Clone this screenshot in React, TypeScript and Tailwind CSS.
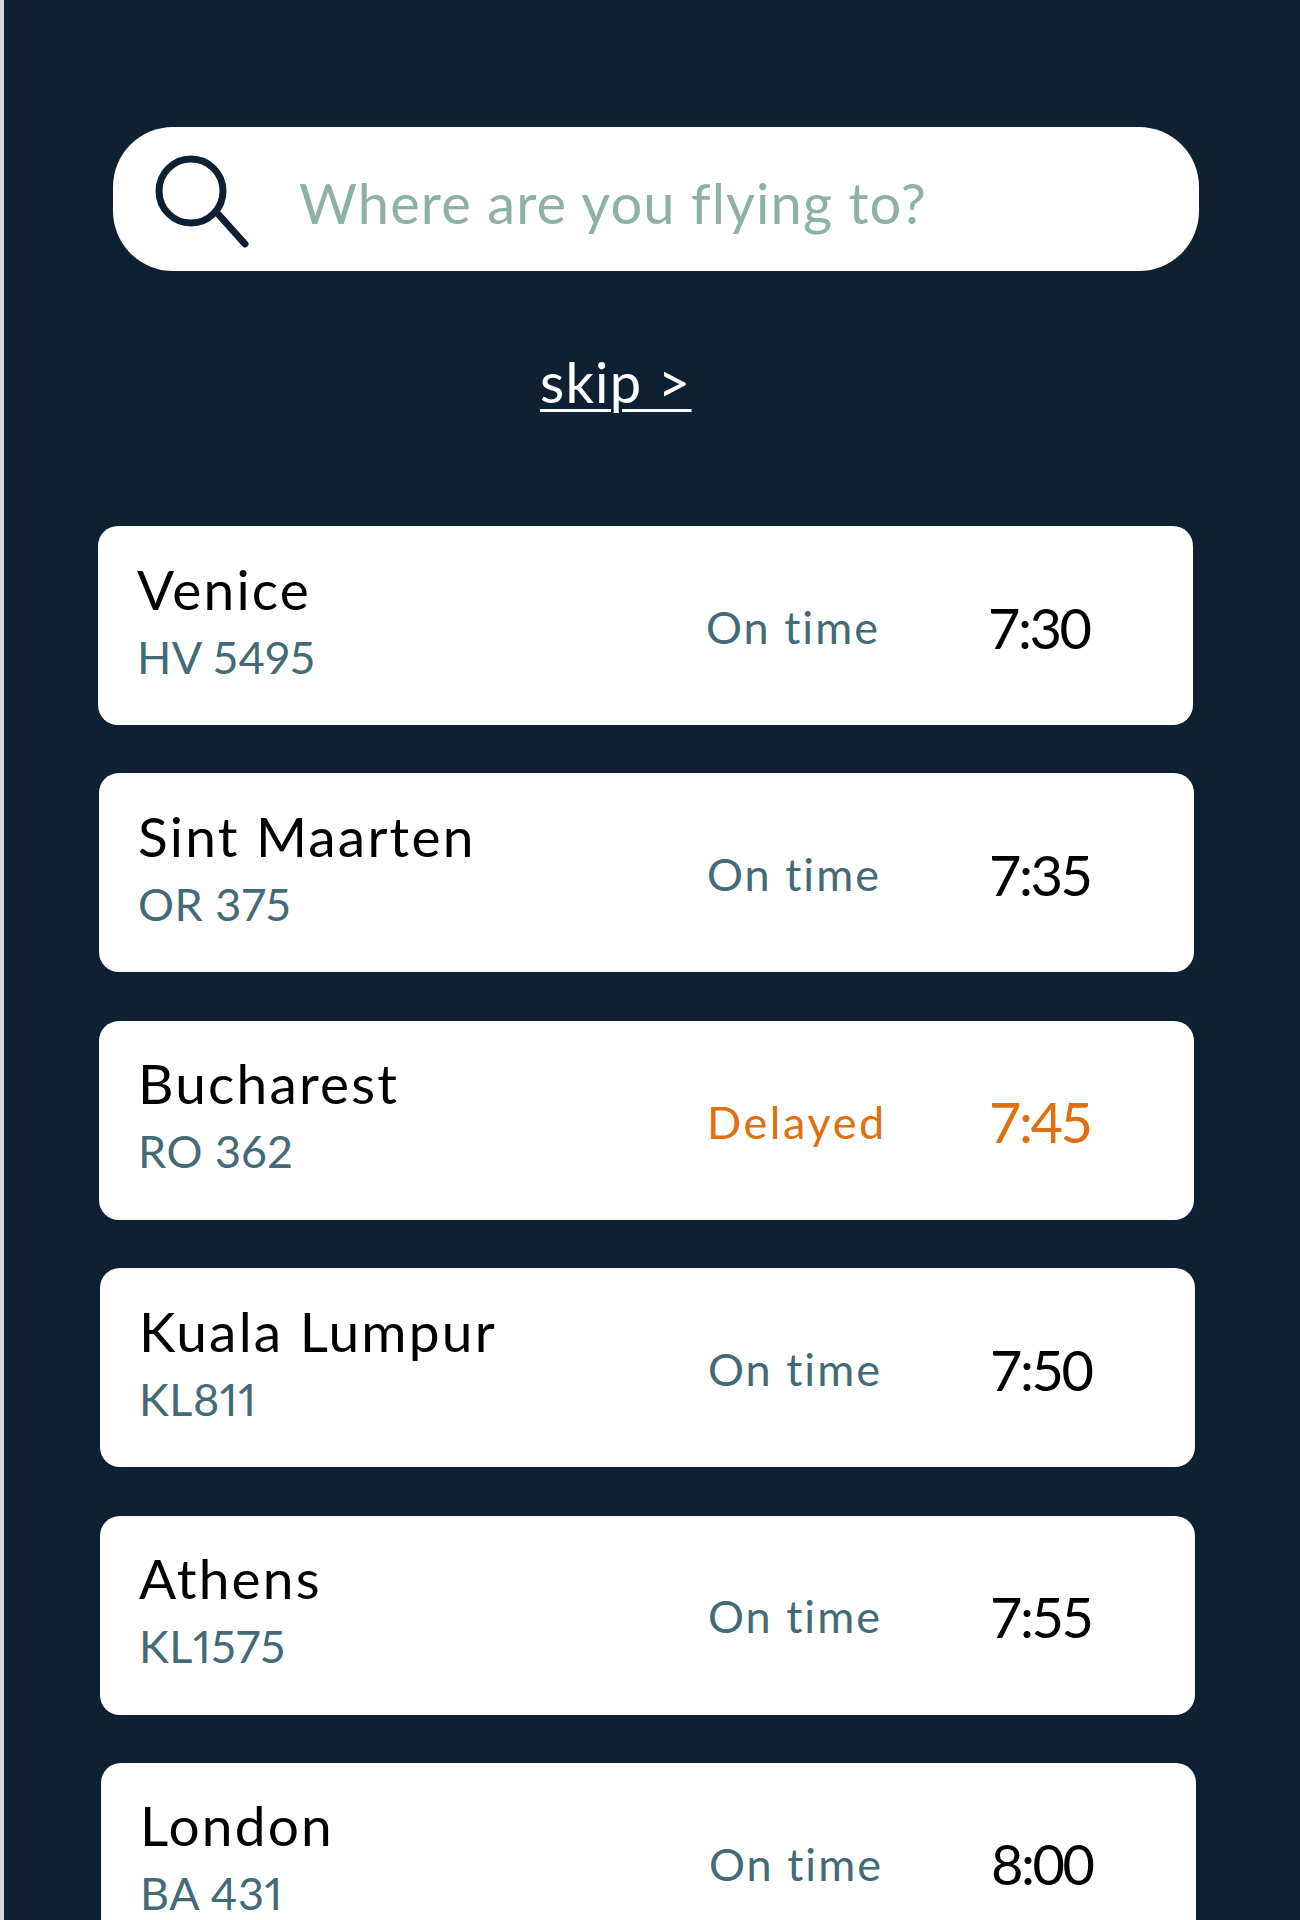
import React from "react";
import { clsx } from "clsx";

type Flight = {
  city: string;
  code: string;
  status: string;
  time: string;
  shift: string;
};

const flights: Flight[] = [
  { city: "Venice", code: "HV 5495", status: "On time", time: "7:30", shift: "ml-[94px]" },
  { city: "Sint Maarten", code: "OR 375", status: "On time", time: "7:35", shift: "ml-[95px]" },
  { city: "Bucharest", code: "RO 362", status: "Delayed", time: "7:45", shift: "ml-[95px]" },
  { city: "Kuala Lumpur", code: "KL811", status: "On time", time: "7:50", shift: "ml-[96px]" },
  { city: "Athens", code: "KL1575", status: "On time", time: "7:55", shift: "ml-[96px]" },
  { city: "London", code: "BA 431", status: "On time", time: "8:00", shift: "ml-[97px]" },
];

function FlightRow({ flight }: { flight: Flight }) {
  const delayed = flight.status === "Delayed";
  return (
    <div className={clsx("flex h-[199px] w-[1095px] shrink-0 items-center rounded-[20px] bg-white pl-[39px]", flight.shift)}>
      <div className="w-[569px] shrink-0 pb-[11px]">
        <div className="text-[55px] leading-[62px] tracking-[2.2px] text-black">{flight.city}</div>
        <div className="mt-[11px] text-[45px] leading-[52px] tracking-[0.5px] text-[#436a76] proportional-nums">{flight.code}</div>
      </div>
      <div
        className={clsx(
          "w-[282px] shrink-0 pt-[4px] text-[45px]",
          delayed ? "tracking-[2.6px] text-[#e06f10]" : "tracking-[2px] text-[#436a76]",
        )}
      >
        {flight.status}
      </div>
      <div className={clsx("pt-[4px] text-[56px] tracking-[-2.5px]", delayed ? "text-[#e06f10]" : "text-black")}>{flight.time}</div>
    </div>
  );
}

export default function App() {
  return (
    <div className="h-[1920px] overflow-hidden border-l-[4px] border-[#d5d9dd] bg-[#0f2032] pt-[127px] font-['Lato',sans-serif]">
      <div className="ml-[109px] flex h-[144px] w-[1086px] items-center rounded-[60px] bg-white pt-[8px] pl-[40px]">
        <svg width="100" height="100" viewBox="0 0 100 100" fill="none" stroke="#0f2032" strokeWidth="7" strokeLinecap="round">
          <circle cx="38" cy="38" r="32" />
          <line x1="66" y1="62" x2="92" y2="91" />
        </svg>
        <span className="ml-[46px] text-[56px] tracking-[1.1px] text-[#8fb0a5]">Where are you flying to?</span>
      </div>
      <div className="mt-[78px] ml-[536px] text-[56px] leading-[66px] tracking-[1.2px] text-white underline decoration-[3px] underline-offset-[6px]">
        skip &gt;
      </div>
      <div className="mt-[111px] flex flex-col gap-[48.4px]">
        {flights.map((flight) => (
          <FlightRow key={flight.city} flight={flight} />
        ))}
      </div>
    </div>
  );
}
